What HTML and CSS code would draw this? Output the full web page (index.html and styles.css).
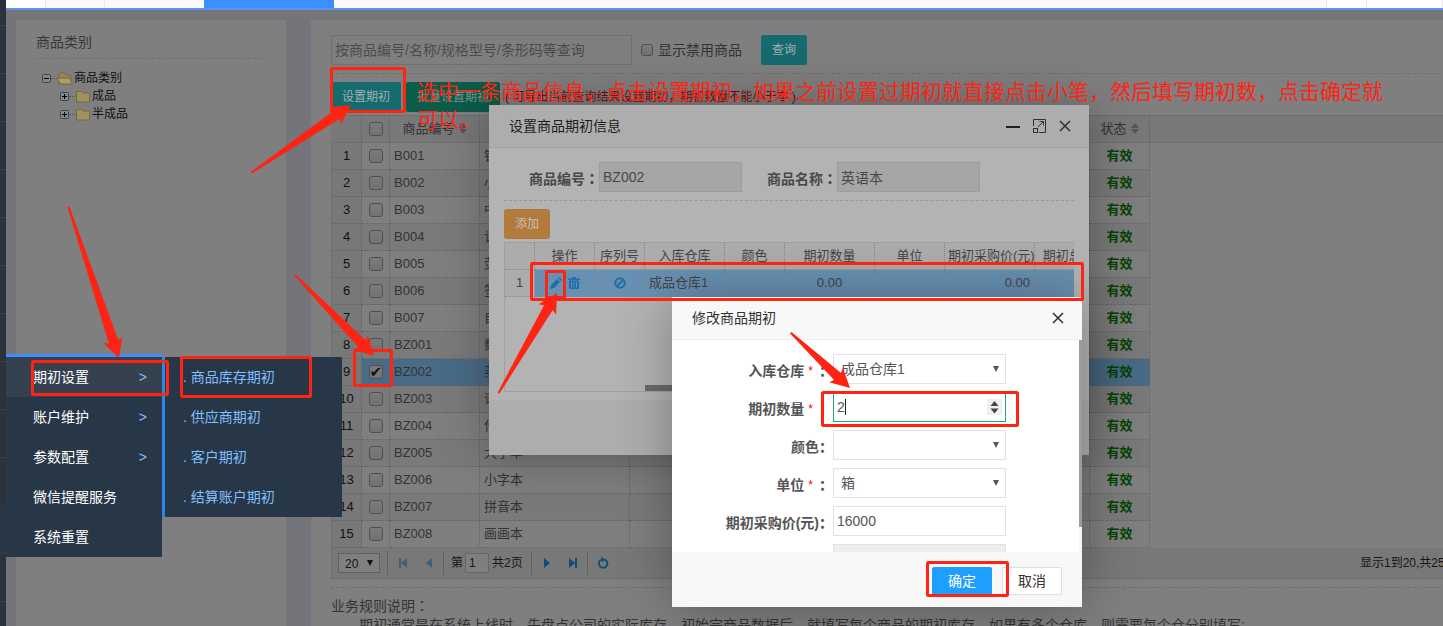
FILE: index.html
```html
<!DOCTYPE html>
<html lang="zh-CN">
<head>
<meta charset="utf-8">
<title>商品库存期初</title>
<link rel="stylesheet" href="styles.css">
</head>
<body>
<div class="app">
  <nav class="rail"></nav>
  <div class="main">
    <div class="tabs"><span class="tab home"></span><span class="tab second"></span><span class="tab third"></span><span class="tab active"></span><span class="tab rest"></span><span class="tab tool"></span><span class="tab end"></span></div>
    <div class="content">
      <aside class="panel side">
        <h2 class="side-title">商品类别</h2>
        <ul class="tree">
          <li><svg class="toggle" viewBox="0 0 9 9"><rect x=".5" y=".5" width="8" height="8" rx="1" fill="#888" stroke="#32485c"/><path d="M2 4.500h5" stroke="#000"/></svg><i class="dots"></i><svg class="folder" viewBox="0 0 16 13"><path d="M2 12V2l1-1h5l1 2h5v9z" fill="#91885a" stroke="#77683c"/><path d="M.500 6h12l3 6H3z" fill="#aaa067" stroke="#77683c"/></svg><span>商品类别</span></li>
          <li class="child"><svg class="toggle" viewBox="0 0 9 9"><rect x=".5" y=".5" width="8" height="8" rx="1" fill="#888" stroke="#32485c"/><path d="M2 4.500h5M4.500 2v5" stroke="#000"/></svg><i class="dots"></i><svg class="folder" viewBox="0 0 16 13"><path d="M1.500 12V1.500h5L8 3h6.500v9z" fill="#a0935f" stroke="#77683c"/></svg><span>成品</span></li>
          <li class="child"><svg class="toggle" viewBox="0 0 9 9"><rect x=".5" y=".5" width="8" height="8" rx="1" fill="#888" stroke="#32485c"/><path d="M2 4.500h5M4.500 2v5" stroke="#000"/></svg><i class="dots"></i><svg class="folder" viewBox="0 0 16 13"><path d="M1.500 12V1.500h5L8 3h6.500v9z" fill="#a0935f" stroke="#77683c"/></svg><span>半成品</span></li>
        </ul>
      </aside>
      <section class="panel list">
        <div class="search">
          <input class="query" type="text" aria-label="查询条件" placeholder="按商品编号/名称/规格型号/条形码等查询">
          <label class="show-off"><input class="small-check" type="checkbox">显示禁用商品</label>
          <button class="btn teal">查询</button>
        </div>
        <div class="actions">
          <button class="btn teal">设置期初</button><button class="btn green">批量设置期初</button>
          <span class="hint">( <em>可导出当前查询结果设置期初，期初数量不能小于零</em> )</span>
        </div>
        <table class="grid">
          <colgroup><col class="c-num"><col class="c-check"><col class="c-code"><col class="c-name"><col class="c-mid"><col class="c-state"><col></colgroup>
          <thead><tr><th></th><th><input class="check" type="checkbox" aria-label="全选"></th><th>商品编号<svg class="sort" viewBox="0 0 8 11"><path d="M0 5l4-5 4 5zM0 6l4 5 4-5z"/></svg></th><th>商品名称</th><th></th><th>状态<svg class="sort" viewBox="0 0 8 11"><path d="M0 5l4-5 4 5zM0 6l4 5 4-5z"/></svg></th><th class="filler"></th></tr></thead>
          <tbody>
            <tr><td>1</td><td><input class="check" type="checkbox" aria-label="B001"></td><td>B001</td><td>铅笔</td><td></td><td>有效</td><td></td></tr>
            <tr><td>2</td><td><input class="check" type="checkbox" aria-label="B002"></td><td>B002</td><td>小笔记本</td><td></td><td>有效</td><td></td></tr>
            <tr><td>3</td><td><input class="check" type="checkbox" aria-label="B003"></td><td>B003</td><td>中性笔</td><td></td><td>有效</td><td></td></tr>
            <tr><td>4</td><td><input class="check" type="checkbox" aria-label="B004"></td><td>B004</td><td>记号笔</td><td></td><td>有效</td><td></td></tr>
            <tr><td>5</td><td><input class="check" type="checkbox" aria-label="B005"></td><td>B005</td><td>荧光笔</td><td></td><td>有效</td><td></td></tr>
            <tr><td>6</td><td><input class="check" type="checkbox" aria-label="B006"></td><td>B006</td><td>签字笔</td><td></td><td>有效</td><td></td></tr>
            <tr><td>7</td><td><input class="check" type="checkbox" aria-label="B007"></td><td>B007</td><td>自动铅笔</td><td></td><td>有效</td><td></td></tr>
            <tr><td>8</td><td><input class="check" type="checkbox" aria-label="BZ001"></td><td>BZ001</td><td>数学本</td><td></td><td>有效</td><td></td></tr>
            <tr class="selected"><td>9</td><td><input class="check" type="checkbox" checked aria-label="BZ002"></td><td>BZ002</td><td>英语本</td><td></td><td>有效</td><td></td></tr>
            <tr><td>10</td><td><input class="check" type="checkbox" aria-label="BZ003"></td><td>BZ003</td><td>语文本</td><td></td><td>有效</td><td></td></tr>
            <tr><td>11</td><td><input class="check" type="checkbox" aria-label="BZ004"></td><td>BZ004</td><td>作文本</td><td></td><td>有效</td><td></td></tr>
            <tr><td>12</td><td><input class="check" type="checkbox" aria-label="BZ005"></td><td>BZ005</td><td>大字本</td><td></td><td>有效</td><td></td></tr>
            <tr><td>13</td><td><input class="check" type="checkbox" aria-label="BZ006"></td><td>BZ006</td><td>小字本</td><td></td><td>有效</td><td></td></tr>
            <tr><td>14</td><td><input class="check" type="checkbox" aria-label="BZ007"></td><td>BZ007</td><td>拼音本</td><td></td><td>有效</td><td></td></tr>
            <tr><td>15</td><td><input class="check" type="checkbox" aria-label="BZ008"></td><td>BZ008</td><td>画画本</td><td></td><td>有效</td><td></td></tr>
          </tbody>
        </table>
        <div class="pager">
          <span class="pick"><select class="size" aria-label="每页条数"><option>20</option></select><i class="tri"></i></span>
          <i class="bar"></i>
          <button class="nav off" aria-label="首页"><svg viewBox="0 0 10 10"><path d="M1 0h2v10H1zM9 0v10L3 5z"/></svg></button>
          <button class="nav off" aria-label="上一页"><svg viewBox="0 0 10 10"><path d="M8 0v10L2 5z"/></svg></button>
          <i class="bar"></i>
          <label class="page">第<input class="page-no" type="text" value="1">共2页</label>
          <i class="bar"></i>
          <button class="nav" aria-label="下一页"><svg viewBox="0 0 10 10"><path d="M2 0v10l6-5z"/></svg></button>
          <button class="nav" aria-label="末页"><svg viewBox="0 0 10 10"><path d="M7 0h2v10H7zM1 0v10l6-5z"/></svg></button>
          <i class="bar"></i>
          <button class="nav" aria-label="刷新"><svg class="reload" viewBox="0 0 12 12"><path d="M4.500 2.500A4.300 4.300 0 1 0 8 2.600" fill="none" stroke="#0f4c77" stroke-width="1.800"/><path d="M4 0l5 2.400L5 5z"/></svg></button>
          <span class="total">显示1到20,共25记录</span>
        </div>
        <div class="notes">
          <p>业务规则说明<span lang="zh-Hant">：</span></p>
          <p class="indent">期初通常是在系统上线时，先盘点公司的实际库存，初始完商品数据后，就填写每个商品的期初库存，如果有多个仓库，则需要每个仓分别填写;</p>
        </div>
      </section>
    </div>
  </div>
</div>

<div class="flyout">
  <ul class="menu">
    <li class="current"><a href="#">期初设置<b>&gt;</b></a></li>
    <li><a href="#">账户维护<b>&gt;</b></a></li>
    <li><a href="#">参数配置<b>&gt;</b></a></li>
    <li><a href="#">微信提醒服务</a></li>
    <li><a href="#">系统重置</a></li>
  </ul>
  <ul class="submenu">
    <li><a href="#">. 商品库存期初</a></li>
    <li><a href="#">. 供应商期初</a></li>
    <li><a href="#">. 客户期初</a></li>
    <li><a href="#">. 结算账户期初</a></li>
  </ul>
</div>

<div class="dialog info" role="dialog" aria-label="设置商品期初信息">
  <header class="dialog-head"><span>设置商品期初信息</span>
    <div class="tools">
      <button class="tool-btn" aria-label="最小化"><svg viewBox="0 0 14 14"><path d="M0 8h14" stroke="#1d1d2b" stroke-width="2"/></svg></button>
      <button class="tool-btn" aria-label="最大化"><svg viewBox="0 0 14 14" fill="none" stroke="#2e2d3c"><path d="M1.500 7V.5h12v13H7"/><rect x="1.500" y="9.500" width="4" height="4"/><path d="M6 8l5-5M7.500 2.500h4v4"/></svg></button>
      <button class="tool-btn" aria-label="关闭"><svg viewBox="0 0 14 14"><path d="M2 2l10 10M12 2L2 12" stroke="#2e2d3c" stroke-width="1.500"/></svg></button>
    </div>
  </header>
  <div class="info-body">
    <div class="fields">
      <label class="field"><span>商品编号<b lang="zh-Hant">：</b></span><input type="text" value="BZ002" readonly></label>
      <label class="field"><span>商品名称<b lang="zh-Hant">：</b></span><input type="text" value="英语本" readonly></label>
    </div>
    <button class="btn orange">添加</button>
    <div class="stock">
      <table class="stock-grid">
        <colgroup><col class="s30"><col class="s60"><col class="s50"><col class="s80"><col class="s60"><col class="s90"><col class="s70"><col class="s90"><col class="s90"></colgroup>
        <thead><tr><th></th><th>操作</th><th>序列号</th><th>入库仓库</th><th>颜色</th><th>期初数量</th><th>单位</th><th class="tight">期初采购价(元)</th><th>期初总额(元)</th></tr></thead>
        <tbody><tr><td>1</td><td><div class="ops"><svg viewBox="0 0 12 12"><path d="M0 12l1-4 6-6 3 3-6 6zM8 1l1-1q1 0 3 3l-1 1z"/></svg><svg viewBox="0 0 12 12"><path d="M0 1.500h3.500L4.500 0h3l1 1.500H12V3H0zM1 3.500h10V12H1z"/><path d="M3.500 5v5.500M6 5v5.500M8.500 5v5.500" stroke="#6890b2"/></svg></div></td><td><svg class="ban" viewBox="0 0 12 12"><circle cx="6" cy="6" r="4.800"/><path d="M2.500 9.500l7-7"/></svg></td><td class="left">成品仓库1</td><td></td><td>0.00</td><td></td><td class="right">0.00</td><td></td></tr></tbody>
      </table>
      <div class="hscroll"></div>
    </div>
  </div>
</div>

<div class="dialog edit" role="dialog" aria-label="修改商品期初">
  <header class="dialog-head"><span>修改商品期初</span>
    <div class="tools"><button class="tool-btn" aria-label="关闭"><svg viewBox="0 0 14 14"><path d="M2 2l10 10M12 2L2 12" stroke="#2e2d3c" stroke-width="1.500"/></svg></button></div>
  </header>
  <div class="edit-body">
    <form class="form">
      <label for="store">入库仓库<sup>*</sup><b lang="zh-Hant">：</b></label><span class="control"><select id="store"><option>成品仓库1</option></select><i class="tri"></i></span>
      <label for="qty">期初数量<sup>*</sup><b lang="zh-Hant">：</b></label><span class="control"><input class="focus" id="qty" type="text" inputmode="numeric" value="2"><i class="caret"></i><svg class="stepper" viewBox="0 0 15 16"><rect width="15" height="16" fill="#efefef"/><path d="M3.500 7l4-5 4 5zM3.500 9.500l4 5 4-5z" fill="#444"/></svg></span>
      <label for="color">颜色<b lang="zh-Hant">：</b></label><span class="control"><select id="color"><option></option></select><i class="tri"></i></span>
      <label for="unit">单位<sup>*</sup><b lang="zh-Hant">：</b></label><span class="control"><select id="unit"><option>箱</option></select><i class="tri"></i></span>
      <label for="price">期初采购价(元)<b lang="zh-Hant">：</b></label><span class="control"><input id="price" type="text" value="16000"></span>
      <span></span><span class="control"><input type="text" class="disabled" aria-label="期初总额" readonly></span>
    </form>
    <div class="vscroll"></div>
  </div>
  <footer class="edit-foot"><button class="ok">确定</button><button class="cancel">取消</button></footer>
</div>

<p class="tip">选中一条商品信息，点击设置期初，如果之前设置过期初就直接点击小笔，然后填写期初数，点击确定就可以。</p>
<svg class="marks" width="1443" height="626" viewBox="0 0 1443 626">
  <defs><g id="head"><path d="M0 0L-19-10-17-5V5L-19 10z"/></g></defs>
  <g fill="none" stroke="#ff2314" stroke-width="3">
    <rect x="331.500" y="68.500" width="73" height="43" rx="1"/>
    <rect x="354.500" y="350.500" width="37" height="35" rx="1"/>
    <rect x="32.500" y="361.500" width="135" height="33" rx="1"/>
    <rect x="181.500" y="357.500" width="129" height="39" rx="1"/>
    <rect x="531.500" y="263.500" width="551" height="36" rx="1"/>
    <rect x="546.500" y="271.500" width="18" height="26" rx="1"/>
    <rect x="822.500" y="392.500" width="195" height="33" rx="1"/>
    <rect x="927.500" y="562.500" width="80" height="33" rx="1"/>
  </g>
  <g fill="#ff2314">
    <g transform="translate(351 105) rotate(-34.2)"><use href="#head"/><path d="M-16-5L-121-1V1L-16 5z"/></g>
    <g transform="translate(119 358) rotate(71.500)"><use href="#head"/><path d="M-16-5L-160-1V1L-16 5z"/></g>
    <g transform="translate(374 356) rotate(45.700)"><use href="#head"/><path d="M-16-5L-113-1V1L-16 5z"/></g>
    <g transform="translate(557 293) rotate(-59.700)"><use href="#head"/><path d="M-16-5L-116-1V1L-16 5z"/></g>
    <g transform="translate(850 388) rotate(43)"><use href="#head"/><path d="M-16-5L-81-1V1L-16 5z"/></g>
  </g>
</svg>
</body>
</html>
```
FILE: styles.css
```css
* { box-sizing: border-box; }
body { margin: 0; height: 100vh; overflow: hidden; position: relative; font: 14px/20px "Liberation Sans", "Noto Sans CJK SC", sans-serif; color: #333; }
input, select, button { font: inherit; color: inherit; margin: 0; }
button { padding: 0; border: 0; background: none; }
ul, p, h2 { margin: 0; padding: 0; list-style: none; }
i, em { font-style: normal; }
a { color: inherit; text-decoration: none; }

.app { display: flex; height: 100vh; overflow: hidden; }
.rail { width: 6px; background: linear-gradient(#283747, #283747) 0 505px / 6px 48px no-repeat, repeating-linear-gradient(#2c323c 0 25px, #3a404a 25px 26px, #2c323c 26px 48px); }
.main { flex: 1; min-width: 0; display: flex; flex-direction: column; }
.tabs { display: flex; height: 10px; background: #fafafa; border-bottom: 2px solid #5f93f3; }
.tab { border-right: 1px solid #e8e8e8; }
.home { width: 40px; background: #fff; }
.second { width: 59px; }
.third { width: 99px; border: 0; }
.active { width: 130px; background: #3c8fff; border: 0; }
.rest { flex: 1; }
.tool { width: 40px; background: #fff; }
.end { width: 76px; background: #fff; }
.content { flex: 1; min-height: 0; display: flex; gap: 25px; padding: 10px 0 0 10px; background: #74757a; }
.panel { background: #7f7f7f; }
.side { width: 270px; padding: 12px 20px; }
.side-title { font-size: 14px; font-weight: 400; line-height: 20px; padding-bottom: 6px; border-bottom: 1px dashed #6e6e6e; color: #383838; }
.tree { padding: 10px 0 0 6px; font-size: 12px; line-height: 18px; color: #111; }
.tree li { display: flex; align-items: center; height: 18px; }
.tree .child { padding-left: 18px; }
.toggle { width: 9px; height: 9px; }
.dots { width: 6px; border-top: 1px dotted #555; }
.folder { width: 16px; height: 13px; margin-right: 1px; }

.list { flex: 1; min-width: 0; padding: 15px 0 0 20px; overflow: hidden; }
.search { display: flex; align-items: center; padding-bottom: 8px; margin-right: 2px; border-bottom: 1px dashed #6e6e6e; }
.query { width: 301px; height: 30px; padding: 0 3px; border: 1px solid #6f6f6f; background: transparent; }
.query::placeholder { color: #4b4b4b; }
.show-off { display: flex; align-items: center; gap: 5px; padding: 0 19px 0 9px; }
.check, .small-check { appearance: none; display: block; width: 14px; height: 14px; margin: 0 auto; border: 1px solid #505050; border-radius: 3px; background: linear-gradient(#7b7b7b, #727272); position: relative; }
.small-check { width: 12px; height: 12px; margin: 0; }
.check:checked::after { content: "✔"; position: absolute; inset: 0; font: 15px/12px "DejaVu Sans", sans-serif; color: #111; }
.btn { height: 30px; padding: 0 11px; border-radius: 2px; font-size: 12px; }
.teal { background: #156b6e; color: #a0b0b0; }
.green { background: #0b5c48; color: #78968c; }
.orange { background: #b27a3c; color: #c8c0b0; border-radius: 3px; }
.actions { display: flex; align-items: center; gap: 5px; padding: 8px 0 3px; }
.hint { font-size: 12px; white-space: nowrap; color: #222; }
.hint em { color: #780b0b; }

.grid { width: 100%; table-layout: fixed; border-collapse: separate; border-spacing: 0; font-size: 13px; line-height: 18px; }
.c-num { width: 31px; } .c-check { width: 28px; } .c-code { width: 90px; } .c-name { width: 150px; } .c-mid { width: 460px; } .c-state { width: 60px; }
.grid th, .grid td { height: 27px; padding: 0 4px; border-right: 1px dotted #616161; border-bottom: 1px dotted #616161; font-weight: 400; text-align: left; white-space: nowrap; overflow: hidden; }
.grid th { height: 28px; text-align: center; background: #787878; border-top: 1px solid #6e6e6e; border-bottom: 1px solid #6e6e6e; }
.grid .filler, .grid td:last-child { border-right: 0; }
.grid tr:nth-child(even) td { background: #7a7a7a; }
.grid tbody tr td:last-child { border-bottom: 0; background: #7f7f7f; }
.grid tbody tr td:first-child { text-align: center; background: #787878; color: #111; border-left: 1px solid #6e6e6e; }
.grid td:nth-child(6) { text-align: center; font-weight: 700; color: #054305; }
.grid .selected td:not(:first-child):not(:last-child) { background: #4a6b86; }
.sort { width: 8px; height: 11px; margin-left: 4px; fill: #555; vertical-align: -1px; }

.pager { display: flex; align-items: center; height: 31px; padding-left: 6px; border: 1px solid #6e6e6e; border-top: 0; border-right: 0; background: #787878; font-size: 12px; color: #161616; }
.pick, .control { position: relative; display: block; }
.pick { margin-right: 6px; }
select { appearance: none; border-radius: 0; }
.tri { position: absolute; right: 7px; top: 12px; border: solid transparent; border-width: 6px 3px 0; border-top-color: #555; pointer-events: none; }
.size { display: block; width: 42px; height: 20px; padding: 0 6px; border: 1px solid #5f5f5f; background: #7f7f7f; }
.pick .tri { top: 7px; border-top-color: #111; }
.bar { width: 1px; height: 24px; background: #626262; margin: 0 2px 0 1px; }
.nav { display: flex; justify-content: center; align-items: center; width: 26px; height: 24px; }
.nav svg { width: 10px; height: 10px; fill: #0f4c77; }
.nav .reload { width: 12px; height: 12px; }
.off svg { fill: #3e6078; }
.page { display: flex; align-items: center; margin: 0 7px 0 5px; }
.page-no { width: 24px; height: 20px; margin: 0 3px 0 2px; padding: 0 3px; border: 1px solid #666; background: #7f7f7f; }
.total { margin-left: auto; width: 83px; white-space: nowrap; }
.notes { margin: 8px 2px 0 0; padding-top: 9px; border-top: 1px dashed #6e6e6e; line-height: 19px; white-space: nowrap; color: #333; }
.indent { padding-left: 28px; }

.flyout { position: absolute; left: 6px; top: 354px; display: flex; align-items: flex-start; color: #fff; }
.menu { width: 156px; border-top: 3px solid #3c8fff; background: #283747; line-height: 40px; }
.current { background: #35414f; }
.menu a { display: flex; justify-content: space-between; padding: 0 15px 0 27px; }
.menu b { font-weight: 400; color: #7cc0ff; }
.submenu { width: 180px; margin-top: 3px; padding-left: 18px; border-left: 3px solid #2e86e6; background: #283747; color: #80bfff; line-height: 40px; }

.dialog { position: absolute; box-shadow: 1px 1px 50px rgba(0, 0, 0, .3); display: flex; flex-direction: column; }
.dialog-head { display: flex; justify-content: space-between; align-items: center; height: 43px; padding: 0 17px 0 20px; border-bottom: 1px solid #a3a3a3; }
.tools { display: flex; gap: 12px; }
.tool-btn, .tool-btn svg { display: block; width: 14px; height: 14px; }
.info { left: 489px; top: 105px; width: 600px; height: 350px; background: #adadad; color: #1d1d1d; }
.info-body { height: 252px; padding: 14px 15px 0; background: #b3b3b3; color: #444; }
.fields { display: flex; gap: 25px; padding: 0 0 8px 25px; border-bottom: 1px dashed #999; }
.field { display: flex; align-items: center; font-weight: 700; color: #484848; white-space: nowrap; }
.field span { padding-top: 3px; }
.field input { width: 143px; height: 30px; padding: 0 3px; border: 1px solid #9c9c9c; background: #a6a6a6; font-weight: 400; }
.info-body > .btn { margin-top: 8px; }
.stock { height: 150px; margin-top: 3px; overflow: hidden; border: 1px solid #a0a0a0; border-right: 0; position: relative; }
.stock-grid { width: 620px; table-layout: fixed; border-collapse: separate; border-spacing: 0; font-size: 13px; line-height: 18px; }
.s30 { width: 30px; } .s50 { width: 50px; } .s60 { width: 60px; } .s70 { width: 70px; } .s80 { width: 80px; } .s90 { width: 90px; }
.stock-grid th, .stock-grid td { height: 27px; padding: 0 4px; font-weight: 400; text-align: center; border-right: 1px dotted #858585; border-bottom: 1px dotted #858585; white-space: nowrap; overflow: hidden; }
.stock-grid th { background: #acacac; }
.stock-grid td { background: #6890b2; }
.stock-grid td:first-child { background: #acacac; }
.stock-grid .tight { padding: 0 0 0 3px; }
.stock-grid .left { text-align: left; }
.stock-grid .right { text-align: right; }
.ops { display: flex; justify-content: center; gap: 6px; }
.ops svg, .ban { width: 12px; height: 12px; fill: #1d70ab; }
.stock-grid .ban { display: block; margin: 0 auto; fill: none; stroke: #1d70ab; stroke-width: 2; }
.hscroll { position: absolute; left: 140px; bottom: 0; width: 300px; height: 6px; background: #6b6b6b; }

.edit { left: 672px; top: 297px; width: 410px; background: #f8f8f8; }
.edit .dialog-head { border-color: #eee; }
.edit-body { display: flex; height: 212px; overflow: hidden; background: #fff; }
.form { flex: 1; display: grid; grid-template-columns: 161px 173px; row-gap: 8px; align-content: start; padding-top: 14px; color: #555; }
.form label { display: flex; justify-content: flex-end; align-items: center; height: 30px; padding-top: 4px; font-weight: 700; color: #555; }
.form sup { margin: 0 6px 0 4px; font-size: 12px; line-height: 12px; font-weight: 400; color: #f00; }
.control input, .control select { display: block; width: 100%; height: 30px; padding: 0 3px; border: 1px solid #e2e2e2; background: #fff; outline: 0; }
.control select { padding: 0 7px; }
.control .focus { border-color: #1aa790; }
.control .disabled { background: #eee; }
.caret { position: absolute; left: 12px; top: 7px; width: 1px; height: 16px; background: #222; }
.stepper { position: absolute; right: 4px; top: 7px; width: 15px; height: 16px; }
.vscroll { width: 3px; background: linear-gradient(#9c9c9c 187px, #f5f5f5 187px); }
.edit-foot { display: flex; justify-content: flex-end; gap: 10px; padding: 15px 20px 12px; background: #f7f7f7; }
.ok, .cancel { width: 60px; height: 28px; border-radius: 2px; background: #1e9fff; color: #fff; }
.cancel { background: #fff; color: #333; border: 1px solid #dedede; }

.tip { position: absolute; left: 417px; top: 78px; width: 970px; font-size: 21px; line-height: 28px; color: #ff2314; pointer-events: none; }
.marks { position: absolute; left: 0; top: 0; pointer-events: none; }
```
